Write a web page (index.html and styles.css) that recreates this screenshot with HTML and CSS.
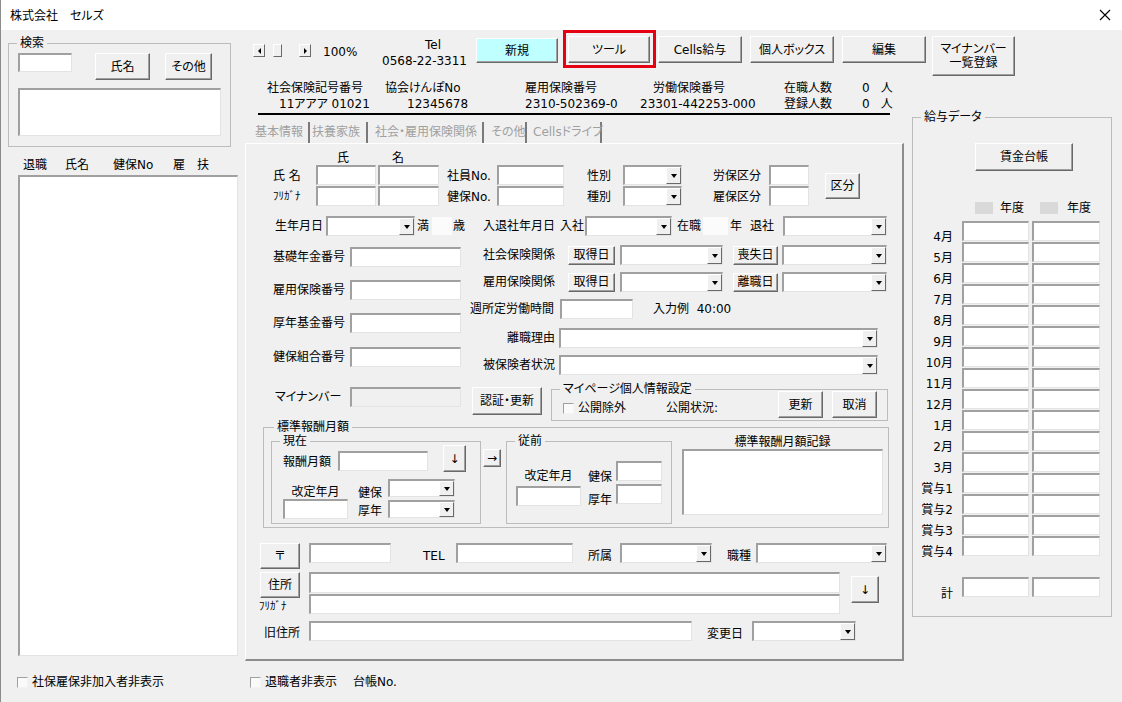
FILE: index.html
```html
<!DOCTYPE html>
<html lang="ja">
<head>
    <meta charset="UTF-8">
    <title>株式会社　セルズ</title>
    <link rel="stylesheet" href="styles.css">
</head>
<body>
<div class="window">
    <div class="titlebar">
        <span class="title">株式会社　セルズ</span>
        <svg class="close" width="12" height="12" viewBox="0 0 12 12"><path d="M1 1L11 11M11 1L1 11" stroke="#000" stroke-width="1.1" fill="none"/></svg>
    </div>

    <div class="client">
        <!-- 左側: 検索と社員一覧 -->
        <aside class="side">
            <div class="frame search">
                <span class="frame-label">検索</span>
                <div class="search-row">
                    <input class="tb search-box" type="text">
                    <button class="btn btn-name">氏名</button>
                    <button class="btn btn-other">その他</button>
                </div>
                <div class="tb search-list"></div>
            </div>
            <div class="list-head">
                <span class="lh-retire">退職</span><span class="lh-name">氏名</span><span class="lh-no">健保No</span><span class="lh-koyo">雇</span><span>扶</span>
            </div>
            <div class="tb emp-list"></div>
            <div class="chk side-chk"><span class="box"></span>社保雇保非加入者非表示</div>
        </aside>

        <div class="main">
            <div class="toolbar">
                <div class="scroller">
                    <span class="sb sb-left"></span>
                    <span class="sb sb-thumb"></span>
                    <span class="sb sb-right"></span>
                </div>
                <span class="zoom-pct">100%</span>
                <div class="tel">
                    <span class="tel-label">Tel</span>
                    <span class="tel-no">0568-22-3311</span>
                </div>
                <button class="btn tbtn btn-new">新規</button>
                <div class="tool-wrap"><button class="btn tbtn">ツール</button></div>
                <button class="btn tbtn btn-cells">Cells給与</button>
                <button class="btn tbtn btn-gap">個人ボックス</button>
                <button class="btn tbtn btn-gap">編集</button>
                <button class="btn tbtn btn-mynum">マイナンバー<br>一覧登録</button>
            </div>

            <div class="info">
                <div class="info-col ic-a"><span>社会保険記号番号</span><span>11アアア 01021</span></div>
                <div class="info-col ic-b"><span>協会けんぽNo</span><span>12345678</span></div>
                <div class="info-col ic-c"><span>雇用保険番号</span><span>2310-502369-0</span></div>
                <div class="info-col ic-d"><span>労働保険番号</span><span>23301-442253-000</span></div>
                <div class="info-col ic-e"><span>在職人数</span><span>登録人数</span></div>
                <div class="info-col ic-f"><span>0<i>人</i></span><span>0<i>人</i></span></div>
            </div>

            <div class="body">
                <div class="tabarea">
                    <div class="tabs">
                        <span class="tab tab-1">基本情報</span>
                        <span class="tab tab-2">扶養家族</span>
                        <span class="tab tab-3">社会・雇用保険関係</span>
                        <span class="tab tab-4">その他</span>
                        <span class="tab tab-5">Cellsドライブ</span>
                    </div>

                    <div class="panel">
                        <div class="r-head"><span class="h-sei">氏</span><span class="h-mei">名</span></div>

                        <div class="r-name">
                            <button class="btn btn-kubun">区分</button>
                            <span class="n-label">氏&nbsp;名</span>
                            <input class="tb w-sei" type="text">
                            <input class="tb w-mei" type="text">
                            <span>社員No.</span>
                            <input class="tb w-no" type="text">
                            <span>性別</span>
                            <div class="cb w-sex"><span class="dd"></span></div>
                            <span>労保区分</span>
                            <input class="tb w-kbn" type="text">

                            <span class="n-label kana-small">ﾌﾘｶﾞﾅ</span>
                            <input class="tb w-sei" type="text">
                            <input class="tb w-mei" type="text">
                            <span>健保No.</span>
                            <input class="tb w-no" type="text">
                            <span>種別</span>
                            <div class="cb w-sex"><span class="dd"></span></div>
                            <span>雇保区分</span>
                            <input class="tb w-kbn" type="text">
                        </div>

                        <div class="r-birth">
                            <span class="b-label">生年月日</span>
                            <div class="cb b-date"><span class="dd"></span></div>
                            <span class="b-man">満</span>
                            <span class="flat b-age"></span>
                            <span class="b-sai">歳</span>
                            <span class="b-nyutai">入退社年月日</span>
                            <span class="b-nyu">入社</span>
                            <div class="cb b-join"><span class="dd"></span></div>
                            <span class="b-zai">在職</span>
                            <span class="flat b-years"></span>
                            <span class="b-nen">年</span>
                            <span class="b-tai">退社</span>
                            <div class="cb b-leave"><span class="dd"></span></div>
                        </div>

                        <div class="mid">
                            <div class="mid-left">
                                <div class="lrow lrow-1"><span class="l-label">基礎年金番号</span><input class="tb" type="text"></div>
                                <div class="lrow lrow-2"><span class="l-label">雇用保険番号</span><input class="tb" type="text"></div>
                                <div class="lrow lrow-3"><span class="l-label">厚年基金番号</span><input class="tb" type="text"></div>
                                <div class="lrow lrow-4"><span class="l-label">健保組合番号</span><input class="tb" type="text"></div>
                            </div>
                            <div class="mid-right">
                                <div class="rrow rrow-1">
                                    <span class="ins-label">社会保険関係</span>
                                    <button class="btn btn-date">取得日</button>
                                    <div class="cb ins-cb1"><span class="dd"></span></div>
                                    <button class="btn btn-loss">喪失日</button>
                                    <div class="cb ins-cb2"><span class="dd"></span></div>
                                </div>
                                <div class="rrow rrow-2">
                                    <span class="ins-label">雇用保険関係</span>
                                    <button class="btn btn-date">取得日</button>
                                    <div class="cb ins-cb1"><span class="dd"></span></div>
                                    <button class="btn btn-loss">離職日</button>
                                    <div class="cb ins-cb2"><span class="dd"></span></div>
                                </div>
                                <div class="rrow rrow-week">
                                    <span class="week-label">週所定労働時間</span>
                                    <input class="tb week-box" type="text">
                                    <span class="week-ex">入力例&nbsp;&nbsp;40:00</span>
                                </div>
                                <div class="rrow rrow-reason">
                                    <span class="wide-label">離職理由</span>
                                    <div class="cb wide-cb"><span class="dd"></span></div>
                                </div>
                                <div class="rrow rrow-status">
                                    <span class="wide-label">被保険者状況</span>
                                    <div class="cb wide-cb"><span class="dd"></span></div>
                                </div>
                            </div>
                        </div>

                        <div class="r-mynum">
                            <span class="mn-label">マイナンバー</span>
                            <input class="tb mn-box" type="text">
                            <button class="btn btn-auth">認証・更新</button>
                            <div class="frame mypage">
                                <span class="frame-label">マイページ個人情報設定</span>
                                <div class="chk mp-chk"><span class="box"></span>公開除外</div>
                                <span class="mp-status">公開状況:</span>
                                <button class="btn btn-upd">更新</button>
                                <button class="btn btn-cancel">取消</button>
                            </div>
                        </div>

                        <div class="frame std">
                            <span class="frame-label std-title">標準報酬月額</span>
                            <div class="frame std-now">
                                <span class="frame-label">現在</span>
                                <div class="now-top">
                                    <span class="now-pay">報酬月額</span>
                                    <input class="tb now-pay-box" type="text">
                                    <button class="btn btn-down">↓</button>
                                </div>
                                <div class="now-bottom">
                                    <div class="rev">
                                        <span class="rev-label">改定年月</span>
                                        <input class="tb rev-box" type="text">
                                    </div>
                                    <div class="now-grid">
                                        <span>健保</span>
                                        <div class="cb now-cb"><span class="dd"></span></div>
                                        <span>厚年</span>
                                        <div class="cb now-cb"><span class="dd"></span></div>
                                    </div>
                                </div>
                            </div>
                            <button class="btn btn-move">→</button>
                            <div class="frame std-prev">
                                <span class="frame-label">従前</span>
                                <div class="rev prev-rev">
                                    <span class="rev-label">改定年月</span>
                                    <input class="tb rev-box" type="text">
                                </div>
                                <div class="prev-grid">
                                    <span>健保</span>
                                    <input class="tb prev-box" type="text">
                                    <span>厚年</span>
                                    <input class="tb prev-box" type="text">
                                </div>
                            </div>
                            <div class="std-log">
                                <span class="log-label">標準報酬月額記録</span>
                                <div class="tb log-box"></div>
                            </div>
                        </div>

                        <div class="addr1">
                            <button class="btn btn-zip">〒</button>
                            <input class="tb zip-box" type="text">
                            <span class="a-tel">TEL</span>
                            <input class="tb tel-box" type="text">
                            <span class="a-dept">所属</span>
                            <div class="cb dept-cb"><span class="dd"></span></div>
                            <span class="a-job">職種</span>
                            <div class="cb job-cb"><span class="dd"></span></div>
                        </div>
                        <div class="addr2">
                            <div class="addr-btns">
                                <button class="btn btn-addr">住所</button>
                                <span class="kana kana-small">ﾌﾘｶﾞﾅ</span>
                            </div>
                            <div class="addr-boxes">
                                <input class="tb addr-box" type="text">
                                <input class="tb addr-kana" type="text">
                            </div>
                            <button class="btn btn-down2">↓</button>
                        </div>
                        <div class="addr3">
                            <span class="a-old">旧住所</span>
                            <input class="tb old-box" type="text">
                            <span class="a-chg">変更日</span>
                            <div class="cb chg-cb"><span class="dd"></span></div>
                        </div>
                    </div>

                    <div class="footer">
                        <div class="chk foot-chk"><span class="box"></span>退職者非表示</div>
                        <span class="ledger-no">台帳No.</span>
                    </div>
                </div>

                <!-- 給与データ -->
                <div class="frame salary">
                    <span class="frame-label">給与データ</span>
                    <button class="btn btn-ledger">賃金台帳</button>
                    <div class="year-row">
                        <span class="year-shade ys-1"></span><span class="yt-1">年度</span>
                        <span class="year-shade ys-2"></span><span class="yt-2">年度</span>
                    </div>
                    <div class="pay-grid">
                        <span>4月</span><input class="tb" type="text"><input class="tb" type="text">
                        <span>5月</span><input class="tb" type="text"><input class="tb" type="text">
                        <span>6月</span><input class="tb" type="text"><input class="tb" type="text">
                        <span>7月</span><input class="tb" type="text"><input class="tb" type="text">
                        <span>8月</span><input class="tb" type="text"><input class="tb" type="text">
                        <span>9月</span><input class="tb" type="text"><input class="tb" type="text">
                        <span>10月</span><input class="tb" type="text"><input class="tb" type="text">
                        <span>11月</span><input class="tb" type="text"><input class="tb" type="text">
                        <span>12月</span><input class="tb" type="text"><input class="tb" type="text">
                        <span>1月</span><input class="tb" type="text"><input class="tb" type="text">
                        <span>2月</span><input class="tb" type="text"><input class="tb" type="text">
                        <span>3月</span><input class="tb" type="text"><input class="tb" type="text">
                        <span>賞与1</span><input class="tb" type="text"><input class="tb" type="text">
                        <span>賞与2</span><input class="tb" type="text"><input class="tb" type="text">
                        <span>賞与3</span><input class="tb" type="text"><input class="tb" type="text">
                        <span>賞与4</span><input class="tb" type="text"><input class="tb" type="text">
                    </div>
                    <div class="pay-grid sum-grid">
                        <span>計</span><input class="tb" type="text"><input class="tb" type="text">
                    </div>
                </div>
            </div>
        </div>
    </div>
</div>
</body>
</html>
```

FILE: styles.css
```css
* {
    box-sizing: border-box;
}

body {
    margin: 0;
    background: #f0f0f0;
    color: #000;
    font-family: "DejaVu Sans", "Noto Sans CJK JP", sans-serif;
    font-size: 12px;
    line-height: 14px;
    font-feature-settings: "palt";
}

span {
    white-space: nowrap;
}

.window {
    position: relative;
    width: 1122px;
    height: 702px;
    overflow: hidden;
    background: #f0f0f0;
}

/* window edge drawn over everything */
.window::before {
    content: "";
    position: absolute;
    top: 0;
    bottom: 0;
    left: 0;
    border-left: 1px solid #8c8c8c;
    pointer-events: none;
}

.titlebar {
    height: 30px;
    background: #fff;
    display: flex;
    align-items: center;
    justify-content: space-between;
    padding: 0 11px 0 10px;
}

.title {
    font-family: "Noto Sans CJK JP", sans-serif;
}

.close {
    display: block;
}

.client {
    display: flex;
    height: 672px;
}

/* ---- common controls ---- */
.tb {
    display: block;
    flex: none;
    margin: 0;
    padding: 0;
    font: inherit;
    outline: none;
    background: #fff;
    border-top: 2px solid #a0a0a0;
    border-left: 2px solid #a0a0a0;
    border-right: 1px solid #e3e3e3;
    border-bottom: 1px solid #e3e3e3;
}

.btn {
    display: block;
    flex: none;
    margin: 0;
    padding: 0;
    font: inherit;
    line-height: 14px;
    color: #000;
    background: #f0f0f0;
    border: 1px solid;
    border-color: #fff #696969 #696969 #fff;
    box-shadow: inset -1px -1px #a0a0a0;
}

.cb {
    display: flex;
    justify-content: flex-end;
    flex: none;
    height: 20px;
    background: #fff;
    border-top: 2px solid #a0a0a0;
    border-left: 2px solid #a0a0a0;
    border-right: 1px solid #e3e3e3;
    border-bottom: 1px solid #e3e3e3;
}

.dd {
    width: 15px;
    height: 100%;
    display: flex;
    align-items: center;
    justify-content: center;
    background: #f0f0f0;
    border: 1px solid;
    border-color: #fff #696969 #696969 #fff;
}

.dd::after {
    content: "";
    border-left: 3.5px solid transparent;
    border-right: 3.5px solid transparent;
    border-top: 4px solid #000;
}

.frame {
    position: relative;
    flex: none;
    border: 1px solid #bcbcbc;
}

.frame-label {
    position: absolute;
    top: -8px;
    left: 8px;
    padding: 0 3px;
    background: #f0f0f0;
    line-height: 14px;
}

.chk {
    display: flex;
    align-items: center;
}

.chk .box {
    width: 11px;
    height: 11px;
    margin-right: 4px;
    background: #fafafa;
    border-top: 1px solid #a0a0a0;
    border-left: 1px solid #a0a0a0;
    border-right: 1px solid #f4f4f4;
    border-bottom: 1px solid #f4f4f4;
}

.flat {
    flex: none;
    height: 18px;
    background: #fbfbfb;
}

.kana-small {
    font-size: 11px;
}

/* ---- left side ---- */
.side {
    width: 245px;
    flex: none;
    display: flex;
    flex-direction: column;
    align-items: flex-start;
}

.search {
    margin: 13px 0 0 8px;
    width: 223px;
    height: 104px;
}

.search-row {
    display: flex;
    align-items: flex-start;
    margin-top: 9px;
    height: 27px;
}

.search-box {
    margin-left: 9px;
    width: 54px;
    height: 19px;
}

.btn-name {
    margin-left: 23px;
    width: 55px;
    height: 27px;
}

.btn-other {
    margin-left: 15px;
    width: 47px;
    height: 27px;
}

.search-list {
    margin: 8px 0 0 9px;
    width: 203px;
    height: 48px;
}

.list-head {
    display: flex;
    margin-top: 10px;
    padding-left: 23px;
    line-height: 16px;
}

.lh-retire { width: 42px; }
.lh-name { width: 48px; }
.lh-no { width: 60px; }
.lh-koyo { width: 24px; }

.emp-list {
    margin: 2px 0 0 18px;
    width: 220px;
    height: 481px;
}

.side-chk {
    margin: 18px 0 0 17px;
    line-height: 16px;
}

/* ---- toolbar ---- */
.main {
    flex: 1;
    display: flex;
    flex-direction: column;
}

.toolbar {
    display: flex;
    align-items: flex-start;
    height: 46px;
}

.scroller {
    display: flex;
    margin: 14px 0 0 8px;
}

.sb {
    width: 12px;
    height: 13px;
    display: flex;
    align-items: center;
    justify-content: center;
    background: #f0f0f0;
    border: 1px solid;
    border-color: #fff #696969 #696969 #fff;
}

.sb-left::after {
    content: "";
    border-top: 3px solid transparent;
    border-bottom: 3px solid transparent;
    border-right: 3px solid #000;
}

.sb-right::after {
    content: "";
    border-top: 3px solid transparent;
    border-bottom: 3px solid transparent;
    border-left: 3px solid #000;
}

.sb-thumb {
    width: 9px;
    margin-left: 8px;
}

.sb-right {
    margin-left: 17px;
}

.zoom-pct {
    margin: 14px 0 0 12px;
    width: 57px;
    line-height: 16px;
}

.tel {
    display: flex;
    flex-direction: column;
    flex: none;
    width: 96px;
    margin-top: 7px;
    line-height: 16px;
}

.tel-label { padding-left: 45px; }
.tel-no { padding-left: 2px; }

.tbtn {
    height: 27px;
    margin-top: 6px;
}

.btn-new {
    width: 82px;
    height: 25px;
    margin-top: 8px;
    background: #c0ffff;
}

.tool-wrap {
    margin-left: 5px;
    border: 3px solid #e50012;
    padding: 3px 3px 2px 2px;
}

.tool-wrap .tbtn {
    width: 82px;
    margin-top: 0;
}

.btn-cells {
    margin-left: 2px;
    width: 84px;
}

.btn-gap {
    margin-left: 8px;
    width: 84px;
}

.btn-mynum {
    margin-left: 6px;
    width: 83px;
    height: 40px;
}

/* ---- header info ---- */
.info {
    display: flex;
    margin-left: 13px;
    width: 632px;
    height: 39px;
    padding-top: 4px;
    border-bottom: 2px solid #000;
    line-height: 16px;
}

.info-col {
    display: flex;
    flex-direction: column;
    flex: none;
}

.ic-a { width: 127px; }
.ic-a span:first-child { padding-left: 9px; }
.ic-a span:last-child { padding-left: 21px; }
.ic-b { width: 139px; }
.ic-b span:last-child { padding-left: 22px; }
.ic-c { width: 116px; padding-left: 1px; }
.ic-d { width: 144px; }
.ic-d span:first-child { padding-left: 13px; }
.ic-e { width: 77px; }
.ic-f { padding-left: 1px; }
.ic-f i { font-style: normal; margin-left: 11px; }

/* ---- tab area ---- */
.body {
    display: flex;
    align-items: flex-start;
}

.tabarea {
    width: 659px;
    flex: none;
}

.tabs {
    display: flex;
    margin-top: 7px;
    height: 21px;
}

.tab {
    color: #a0a0a0;
    line-height: 21px;
    border-right: 2px solid #7a7a7a;
}

.tab-1 { width: 65px; padding-left: 10px; }
.tab-2 { width: 58px; padding-left: 2px; }
.tab-3 { width: 116px; padding-left: 7px; }
.tab-4 { width: 43px; padding-left: 7px; }
.tab-5 { width: 75px; padding-left: 6px; }

.panel {
    height: 518px;
    border-top: 1px solid #fff;
    border-left: 1px solid #fff;
    border-right: 2px solid #8c8c8c;
    border-bottom: 2px solid #8c8c8c;
}

.r-head {
    display: flex;
    align-items: flex-end;
    height: 21px;
}

.h-sei { margin-left: 91px; }
.h-mei { margin-left: 43px; }

.r-name {
    display: grid;
    grid-template-columns: 70px 62px 69px 50px 90px 36px 90px 56px 56px 35px;
    grid-template-rows: 21px 21px;
    align-items: center;
}

.r-name .tb,
.r-name .cb {
    align-self: start;
    height: 20px;
}

.n-label { padding-left: 27px; }
.w-sei { width: 60px; }
.w-mei { width: 61px; }
.w-no { width: 67px; }
.w-sex { width: 59px; }
.w-kbn { width: 40px; }

.btn-kubun {
    grid-column: 10;
    grid-row: 1 / 3;
    width: 35px;
    height: 26px;
}

.r-birth {
    display: flex;
    align-items: center;
    margin-top: 9px;
    height: 20px;
}

.b-label { margin-left: 29px; }
.b-date { margin-left: 3px; width: 89px; }
.b-man { margin-left: 2px; }
.b-age { margin-left: 3px; width: 20px; }
.b-sai { margin-left: 1px; }
.b-nyutai { margin-left: 18px; }
.b-nyu { margin-left: 5px; }
.b-join { margin-left: 1px; width: 87px; }
.b-zai { margin-left: 5px; }
.b-years { margin-left: 2px; width: 25px; }
.b-nen { margin-left: 2px; }
.b-tai { margin-left: 8px; }
.b-leave { margin-left: 9px; width: 104px; }

.mid {
    display: flex;
}

.mid-left {
    width: 216px;
    flex: none;
}

.lrow {
    display: flex;
    align-items: center;
    height: 20px;
}

.l-label {
    width: 104px;
    padding-left: 27px;
}

.lrow .tb {
    width: 111px;
    height: 20px;
}

.lrow-1 { margin-top: 11px; }
.lrow-2 { margin-top: 13px; }
.lrow-3 { margin-top: 13px; }
.lrow-4 { margin-top: 14px; }

.mid-right {
    flex: 1;
}

.rrow {
    display: flex;
    align-items: center;
    height: 20px;
}

.rrow-1 { margin-top: 9px; }
.rrow-2 { margin-top: 7px; }
.rrow-week { margin-top: 7px; }
.rrow-reason { margin-top: 9px; }
.rrow-status { margin-top: 7px; }

.ins-label { margin-left: 21px; width: 72px; }
.btn-date { margin-left: 13px; width: 47px; height: 19px; }
.ins-cb1 { margin-left: 5px; width: 103px; }
.btn-loss { margin-left: 10px; width: 45px; height: 19px; }
.ins-cb2 { margin-left: 4px; width: 105px; }

.week-label { margin-left: 8px; width: 84px; }
.week-box { margin-left: 6px; width: 73px; height: 20px; }
.week-ex { margin-left: 20px; }

.wide-label {
    width: 93px;
    text-align: right;
}

.wide-cb {
    margin-left: 4px;
    width: 319px;
}

.r-mynum {
    display: flex;
    align-items: flex-start;
    margin-top: 11px;
    height: 35px;
}

.mn-label {
    margin-top: 1px;
    width: 104px;
    padding-left: 29px;
    line-height: 20px;
}

.mn-box {
    margin-top: 1px;
    width: 111px;
    height: 20px;
    background: #f0f0f0;
}

.btn-auth {
    margin: 1px 0 0 11px;
    width: 70px;
    height: 28px;
}

.mypage {
    display: flex;
    align-items: flex-start;
    margin: 3px 0 0 9px;
    width: 337px;
    height: 32px;
}

.mp-chk { margin: 11px 0 0 11px; }
.mp-status { margin: 11px 0 0 40px; }

.btn-upd {
    margin: 1px 0 0 auto;
    width: 45px;
    height: 27px;
}

.btn-cancel {
    margin: 1px 10px 0 9px;
    width: 45px;
    height: 27px;
}

/* 標準報酬月額 */
.std {
    display: flex;
    align-items: flex-start;
    margin: 6px 0 0 17px;
    width: 626px;
    height: 101px;
}

.std-title { left: 10px; }

.std-now {
    margin: 13px 0 0 7px;
    width: 210px;
    height: 83px;
}

.now-top {
    display: flex;
    align-items: flex-start;
    margin-top: 3px;
}

.now-pay { margin: 10px 0 0 11px; width: 48px; }
.now-pay-box { margin: 6px 0 0 7px; width: 90px; height: 20px; }
.btn-down { margin-left: 15px; width: 23px; height: 27px; }

.now-bottom {
    display: flex;
    align-items: flex-start;
    margin-top: 7px;
}

.rev {
    display: flex;
    flex-direction: column;
    margin-left: 11px;
    width: 65px;
}

.rev-label {
    margin-top: 6px;
    text-align: center;
}

.rev-box {
    width: 65px;
    height: 20px;
}

.now-grid {
    display: grid;
    grid-template-columns: 30px 67px;
    grid-template-rows: 21px 18px;
    margin-left: 10px;
}

.now-grid span { align-self: end; }
.now-cb { width: 67px; height: 18px; }

.btn-move {
    margin: 21px 0 0 2px;
    width: 18px;
    height: 18px;
}

.std-prev {
    display: flex;
    align-items: flex-start;
    margin: 13px 0 0 5px;
    width: 166px;
    height: 83px;
}

.prev-rev {
    margin: 27px 0 0 9px;
}

.prev-rev .rev-label { margin: 0 0 3px; }

.prev-grid {
    display: grid;
    grid-template-columns: 28px 46px;
    grid-template-rows: 23px 23px;
    margin: 19px 0 0 7px;
}

.prev-grid span { align-self: end; }
.prev-box { width: 46px; height: 20px; }

.std-log {
    display: flex;
    flex-direction: column;
    margin: 7px 0 0 10px;
    width: 201px;
}

.log-label { text-align: center; }
.log-box { height: 66px; }

/* 住所 */
.addr1 {
    display: flex;
    align-items: flex-start;
    margin-top: 15px;
}

.btn-zip { margin-left: 14px; width: 40px; height: 26px; }
.zip-box { margin-left: 9px; width: 82px; height: 20px; }
.a-tel { margin: 6px 0 0 32px; width: 33px; }
.tel-box { width: 117px; height: 20px; }
.a-dept { margin: 6px 0 0 15px; width: 32px; }
.dept-cb { width: 92px; }
.a-job { margin: 6px 0 0 15px; width: 29px; }
.job-cb { width: 131px; }

.addr2 {
    display: flex;
    align-items: flex-start;
    margin-top: 3px;
}

.addr-btns {
    display: flex;
    flex-direction: column;
    margin-left: 14px;
    width: 40px;
}

.btn-addr { width: 40px; height: 26px; }
.kana { margin: 3px 0 0 -1px; line-height: 12px; }

.addr-boxes {
    display: flex;
    flex-direction: column;
    gap: 1px;
    margin-left: 9px;
    width: 531px;
}

.addr-box { width: 531px; height: 21px; }
.addr-kana { width: 531px; height: 20px; }

.btn-down2 {
    margin: 4px 0 0 11px;
    width: 28px;
    height: 27px;
}

.addr3 {
    display: flex;
    align-items: center;
    margin-top: 7px;
    height: 20px;
}

.a-old { margin-left: 18px; width: 45px; padding-top: 3px; }
.old-box { width: 383px; height: 20px; }
.a-chg { margin-left: 15px; width: 45px; padding-top: 5px; }
.chg-cb { width: 104px; }

.footer {
    display: flex;
    margin-top: 13px;
    line-height: 16px;
}

.foot-chk { margin-left: 5px; }
.ledger-no { margin-left: 16px; }

/* 給与データ */
.salary {
    margin: 2px 0 0 8px;
    width: 200px;
    height: 500px;
}

.btn-ledger {
    margin: 25px 0 0 62px;
    width: 98px;
    height: 28px;
}

.year-row {
    display: flex;
    align-items: center;
    margin-top: 30px;
    height: 14px;
}

.year-shade {
    width: 18px;
    height: 12px;
    background: #d9d9d9;
}

.ys-1 { margin-left: 62px; }
.yt-1 { margin-left: 7px; }
.ys-2 { margin-left: 16px; }
.yt-2 { margin-left: 9px; }

.pay-grid {
    display: grid;
    grid-template-columns: 49px 70px 68px;
    grid-auto-rows: 21px;
    margin-top: 6px;
}

.pay-grid span {
    align-self: end;
    margin-bottom: -2px;
    padding-right: 9px;
    text-align: right;
}

.pay-grid .tb {
    width: 67px;
    height: 20px;
}

.pay-grid .tb:nth-child(3n) {
    width: 68px;
}

.sum-grid {
    margin-top: 20px;
}

.sum-grid span {
    margin-bottom: -3px;
}
```
